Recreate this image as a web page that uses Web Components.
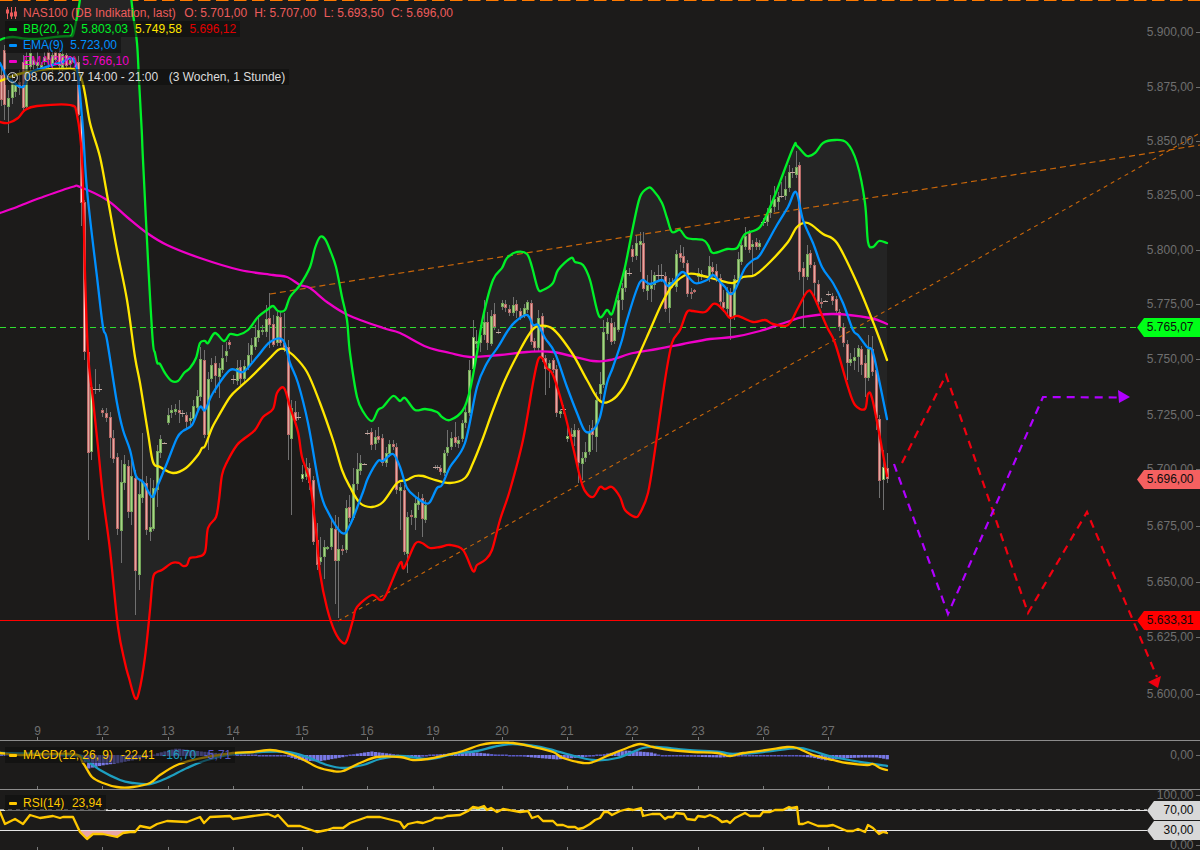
<!DOCTYPE html>
<html><head><meta charset="utf-8"><title>NAS100</title>
<style>html,body{margin:0;padding:0;background:#1c1b1a;overflow:hidden}</style></head>
<body>
<trade-chart>
  <main-panel>
    <chart-legend>
      <legend-row kind="candle" color="#ec5c5c"><span>NAS100 (DB Indikation, last)</span><span style="margin-left:1px">O: 5.701,00</span><span style="margin-left:-.5px">H: 5.707,00</span><span>L: 5.693,50</span><span style="margin-left:-.5px">C: 5.696,00</span></legend-row>
      <legend-row kind="line" color="#00f028" shade><span>BB(20, 2)</span><span>5.803,03</span><span style="color:#ffe600;margin-left:-.5px">5.749,58</span><span style="color:#e00000">5.696,12</span></legend-row>
      <legend-row kind="line" color="#0090ff" shade><span>EMA(9)</span><span style="margin-left:-1px">5.723,00</span></legend-row>
      <legend-row kind="line" color="#f000c8"><span>EMA(200)</span><span style="margin-left:-2.5px">5.766,10</span></legend-row>
      <legend-row kind="clock" color="#dcdcdc" shade><span style="margin-left:1px">08.06.2017 14:00 - 21:00</span><span style="margin-left:3px">(3 Wochen, 1 Stunde)</span></legend-row>
    </chart-legend>
    <price-tag top="318" bg="#00ff18">5.765,07</price-tag>
    <price-tag top="470" bg="#f46060">5.696,00</price-tag>
    <price-tag top="611" bg="#ff0000">5.633,31</price-tag>
  </main-panel>
  <macd-panel>
    <chart-legend offset="6">
      <legend-row kind="line" color="#ffc800" shade><span>MACD(12, 26, 9)</span><span>-22,41</span><span style="color:#1e9fc0">-16,70</span><span style="color:#5a5ac8">-5,71</span></legend-row>
    </chart-legend>
  </macd-panel>
  <rsi-panel>
    <chart-legend offset="5">
      <legend-row kind="line" color="#ffc800" shade><span>RSI(14)</span><span>23,94</span></legend-row>
    </chart-legend>
    <price-tag top="11" bg="#d8d8d8" short>70,00</price-tag>
    <price-tag top="31" bg="#d8d8d8" short>30,00</price-tag>
  </rsi-panel>
</trade-chart>
<script>
const FONT='"Liberation Sans",Arial,sans-serif';
const DAYS=[[37.5,'9'],[102.5,'12'],[168,'13'],[233,'14'],[302,'15'],[367,'16'],[433,'19'],[502,'20'],[567,'21'],[632,'22'],[698,'23'],[763,'26'],[828,'27']];

const P=s=>s.trim().split(/\s+/).map(p=>p.split(',').map(Number));
const UPPER=P(`0,40 5,38 13,37 20,38 33,39 47,38 60,36.5 70,36 73,35 76,22 78,12 80.5,-4 131,-4 133,14 137,43 139,80 141.7,130 143,160 148,260 152.7,340 155,353 157.3,363 160,364 165,373 171.7,381 178,381 184,373 190,368 196,358 200,343 205,341 208,343 215,333 224,341 230,334 238,335 248,330 258,317 267,310 273,306 278,311 285,310 290,297 300,285 310,267 315,248 320,237 325,239 330,250 336,267 342,297 347,320 350,353 357,397 364,413 372,421 378,410 383,407 393,396 400,401 405,398 415,410 425,409 437,412 442,417 450,420 463,410 470,390 477,353 483,317 493,280 502,268 507,258 517,252 527,254 532,267 538,289 543,290 553,283 558,270 571,258 575,262 583,265 590,280 599,316 607,310 612,314 618,293 625,267 633,227 640,197 648,188 653,190 662,203 667,218 672,232 680,230 687,238 703,240 708,245 713,253 727,249 737,248 745,234 760,227 773,200 793,148 797,146 807,156 815,153 823,143 835,140 847,143 857,163 865,203 868,242 873,247 879,241 887,243`);
const LOWER=P(`0,122 8,123 18,118 25,110 37,106 70,105 77,115 82,160 85,273 88,353 93,400 98,447 103,497 110,550 118,627 125,663 129,678 135,698 139,692 145,657 150,610 153,578 157,572 162,570 172,563 179,563 183,566 187,565 190,558 197,557 205,552 208,528 216,517 219,500 222,475 227,462 237,445 245,438 255,430 263,417 273,409 277,393 284,388 290,407 298,432 302,457 310,483 317,540 320,573 327,608 335,632 343,643 347,640 353,620 357,607 372,595 380,600 386,595 400,563 404,568 415,544 422,543 430,548 440,547 450,545 463,550 473,571 477,565 485,560 492,550 500,520 510,490 523,440 533,383 538,360 542,358 547,368 553,375 563,407 573,447 580,477 585,491 593,497 600,487 605,489 612,487 620,497 625,510 635,517 640,513 648,493 655,450 665,380 672,343 680,330 687,312 693,311 705,312 713,304 718,305 725,312 730,318 738,316 753,322 765,320 773,324 788,325 798,308 807,292 813,295 827,327 835,343 848,387 855,405 865,409 868,394 873,402 887,476`);
const MID=P(`0,81 23,73 60,69 80,75 90,123 100,157 108,200 117,250 127,300 135,357 140,383 148,433 153,462 160,467 173,473 186,468 198,455 202,448 205,446 212,428 218,417 230,397 240,387 250,378 270,358 278,350 284,349 293,355 307,372 320,403 333,440 342,470 350,487 360,503 372,507 383,502 397,483 407,480 415,476 423,476 432,479 450,483 465,478 473,463 483,438 493,410 505,380 520,350 530,333 538,326 553,329 572,353 587,380 600,401 612,400 623,388 633,368 650,330 662,303 673,285 688,274 703,276 718,280 733,283 743,277 755,275 770,262 788,242 797,227 808,223 823,234 837,243 857,283 875,327 887,360`);
const EMA9=P(`0,63 7,77 13,82 23,87 30,73 43,68 60,63 75,62 82,117 87,190 97,277 103,327 107,340 117,403 123,430 130,450 136,476 143,482 152,497 157,487 167,463 177,438 183,431 192,425 200,407 205,410 213,393 230,370 243,372 257,357 270,342 283,340 290,363 298,383 308,423 320,490 328,512 342,533 350,525 363,492 368,478 378,461 383,461 393,454 400,467 407,488 417,498 425,503 430,502 437,488 442,485 450,467 465,443 477,387 487,363 498,347 507,332 515,322 527,315 533,325 538,325 545,338 555,353 567,387 577,413 585,431 593,430 600,417 607,383 613,367 622,340 627,320 640,282 650,284 662,280 668,286 675,280 683,272 695,283 707,280 713,275 720,282 725,287 730,294 735,290 745,268 753,260 760,255 777,225 788,207 796,192 803,220 813,243 822,267 833,283 843,303 853,330 858,335 867,347 872,350 877,370 887,419`);
const EMA200=P(`0,213 17,207 40,198 72,187 80,187 107,200 127,217 147,233 167,245 200,258 240,270 273,275 287,277 300,285 310,288 327,302 348,315 383,328 400,333 427,347 450,353 470,357 500,355 527,352 553,352 593,361 610,360 633,353 657,349 683,344 710,339 733,337 760,331 787,322 803,317 833,314 870,318 887,324`);
const MACD_Y=P(`0,753 20,755 73,754 83,763 92,777 103,783 117,787 133,787 150,783 160,775 177,765 197,759 213,756 233,753 253,752 270,750 283,752 300,758 317,767 333,771 343,771 360,763 377,757 400,757 413,760 428,759 447,755 463,751 480,745 492,743 513,743 533,747 553,752 563,758 583,763 593,762 607,756 627,748 640,744 653,747 670,750 693,752 717,753 730,756 743,753 767,750 787,747 797,748 813,755 833,760 847,763 867,765 873,764 880,768 887,770`);
const MACD_T=P(`0,753 73,755 83,758 100,770 120,780 133,783 150,784 167,778 187,768 207,760 233,754 260,752 287,752 307,757 327,765 343,768 363,765 380,759 400,756 430,759 453,754 477,751 493,747 513,744 540,747 567,754 593,760 617,758 643,748 657,747 687,750 720,752 733,754 763,752 797,748 813,751 833,757 867,763 887,766`);
const HIST=P(`0,-1 40,0 80,1 87,13 100,10 120,7 150,1 155,-2 175,-7 200,-4 230,-1 285,1 300,5 317,6 345,1 350,-1 370,-4 395,-1 400,1 418,2 430,-1 450,-2 475,-3 495,-1 520,1 555,4 590,1 600,-1 625,-5 650,-3 660,0 680,1 720,2 735,1 797,1 810,2 825,5 840,3 860,2 875,2 887,4`);
const RSI=P(`0,812 5,824 15,819 23,824 30,815 40,818 53,816 60,818 63,817 73,817 80,832 87,839 93,834 103,834 117,837 123,833 130,832 135,832 140,826 150,828 157,824 167,821 187,822 200,817 204,823 210,817 230,816 233,819 253,816 268,814 275,817 278,815 288,826 300,826 317,832 327,830 333,828 343,828 350,823 367,817 380,817 400,822 404,828 408,824 417,822 423,823 432,820 435,818 442,818 447,816 460,815 468,811 473,807 478,808 484,806 487,810 491,808 497,812 503,809 520,812 528,811 532,818 538,816 543,821 553,821 557,825 563,825 568,827 575,827 578,829 583,828 590,824 595,820 600,818 604,812 608,812 612,815 620,811 628,809 633,810 641,808 643,816 652,814 660,814 665,819 668,817 673,817 676,813 684,814 687,819 695,820 698,816 705,817 710,815 717,818 722,822 727,821 730,823 735,818 745,813 750,816 760,816 763,812 770,812 775,810 783,810 789,807 792,808 797,807 799,824 803,824 808,822 818,826 827,826 833,825 840,828 847,831 853,831 858,829 865,832 868,825 873,828 879,834 883,832 887,833`);

const C=[[1,75,100,'r',68,106],[4,50,105,'r',45,120],[8,98,107,'g',90,133],[12,82,98,'g',74,104],[15,85,92,'g'],[19,82,88,'r',70,95],[23,62,108,'r',55,111],[26,60,107,'g',52,110],[30,53,67,'g',45,75],[33,60,65,'g'],[37,62,66,'g',52,72],[41,65,68,'g'],[44,57,62,'g'],[48,52,60,'r',46,68],[52,55,64,'g',50,72],[55,52,60,'r'],[59,53,66,'r',48,72],[62,54,68,'g'],[66,55,66,'r'],[70,60,64,'g'],[73,58,62,'r'],[77.7,62,115,'r',56,116],[81,116,203,'R',114,226],[84,202,352,'R',200,360],[88,352,453,'r',350,540],[91,387,452,'G',385,460],
[95,389,389,'d',369,394],[99,389,389,'d'],[102,410,413,'r'],[106,413,418,'r',408,422],[110,417,438,'r',412,458],[113,438,459,'r',430,463],[117,457,529,'r',453,535],[121,482,531,'g',460,563],[124,464,483,'g',455,490],[128,466,512,'r',460,518],[131,476,512,'g',453,525],[135,478,571,'r',470,615],[139,494,575,'g',480,590],[142,482,498,'g',433,503],[146,483,530,'r',476,535],[150,527,532,'g',478,541],[153,488,529,'g',480,531],[157,451,490,'g',445,507],[160,439,453,'g'],[164,443,443,'d'],[168,415,423,'g',408,425],[171,410,413,'g',405,418],[175,409,412,'g',404,415],[179,410,413,'r',400,423],[182,413,413,'d',410,417],[186,415,422,'r',412,428],[190,418,421,'g',412,425],[193,406,419,'g',400,423],[197,396,408,'g',390,412],[200,359,397,'g',347,401],[204,360,435,'r',350,438],[208,379,435,'g',372,450],[211,365,379,'g',358,382],[215,363,376,'r',356,393],[219,368,377,'g',363,398],[222,358,370,'g',345,373],[226,351,356,'g',342,362],[229,342,345,'r'],[233,379,379,'d'],[237,368,381,'g',360,385],[240,367,379,'r',360,385],[244,366,379,'g',360,382],[248,355,367,'g',343,370],[251,345,355,'g',338,362],[255,337,347,'g',325,350],[258,330,338,'g',315,342],[262,330,332,'g'],[266,319,332,'g',305,337],[269,318,325,'r',293,348],[273,324,345,'r',315,347],[277,316,343,'g',312,346],[280,317,343,'r',312,346],[284,343,348,'r',313,352],[288,347,435,'r',340,460],[291,408,439,'g',400,515],[295,412,421,'r',401,425],[298,417,417,'d'],
[302,474,479,'G',465,482],[306,467,477,'g',458,480],[309,468,483,'r',463,490],[313,480,542,'r',476,545],[317,540,565,'r',523,570],[320,557,562,'g',537,565],[324,547,557,'g',540,579],[327,547,549,'g'],[331,528,547,'g',520,550],[335,529,561,'r',515,604],[338,549,561,'g',517,618],[342,549,551,'r',545,555],[346,508,550,'g',500,553],[349,507,518,'r',495,522],[353,484,518,'g',468,520],[357,469,484,'g',453,490],[360,463,471,'g',455,475],[364,464,464,'d'],[367,433,433,'d'],[371,432,445,'r',428,450],[375,437,444,'g',430,450],[378,436,440,'r',427,443],[382,438,463,'r',434,466],[386,453,463,'g',447,467],[389,444,454,'g',440,457],[393,444,447,'r',440,450],[396,447,490,'r',443,494],[400,487,491,'g',483,530],[404,490,552,'r',485,555],[407,517,554,'g',512,573],[411,515,517,'r',510,525],[415,503,518,'g',497,530],[418,499,505,'g',492,510],[422,498,519,'r',494,537],[425,505,520,'g',500,523],
[435,467,467,'d',465,469],[437,467,467,'d',465,470],[440,468,472,'r',465,475],[444,453,473,'g',450,476],[447,447,453,'g',430,456],[451,438,447,'g',432,450],[455,437,443,'r',422,447],[458,440,444,'g',436,448],[462,423,439,'g',420,442],[465,412,423,'g',405,428],[469,370,413,'g',360,416],[473,337,369,'G',320,372],[476,341,344,'g',330,348],[480,335,343,'g',325,352],[484,322,335,'g',300,340],[487,322,343,'r',312,350],[491,316,344,'g',310,346],[494,314,327,'r',303,330],[498,332,332,'d'],[502,303,307,'g',300,310],[505,304,308,'r',300,312],[509,309,313,'r',305,316],[513,305,313,'g',297,316],[516,304,311,'r',300,318],[520,311,317,'r',308,320],[524,308,315,'g',304,318],[527,302,310,'g',300,313],[531,303,342,'r',300,345],[534,341,348,'r',338,352],[538,318,348,'g',310,352],[542,316,358,'r',313,362],[545,358,369,'r',355,395],[549,363,369,'g',360,388],[553,360,370,'r',358,373],[556,369,413,'r',365,417],[560,411,414,'g'],[563,409,409,'d'],[567,436,439,'G',427,442],[571,434,437,'r',428,442],[574,430,437,'g',424,446],[578,430,463,'r',428,483],[582,458,464,'g',452,480],[585,452,458,'g',442,462],[589,432,452,'g',425,455],[592,428,435,'r',420,450],[596,400,437,'g',392,452],[600,384,394,'g',372,400],[603,332,385,'g',320,388],[607,322,334,'g',318,340],[611,323,342,'r',318,345],[614,327,341,'g',322,344],[618,300,330,'g',295,332],[622,288,300,'g',283,310],[625,270,288,'g',263,292],[629,273,273,'d'],[632,249,257,'r',245,262],[636,243,256,'g',235,260],[640,241,245,'g',232,272],[643,243,289,'r',232,292],[647,285,291,'g',275,300],[651,285,289,'g',270,302],[654,275,285,'g',272,290],[658,275,275,'d',265,280],[661,275,275,'d',264,282],[665,276,309,'r',272,312],[669,282,308,'g',278,323],[672,282,285,'g',278,288],[676,254,287,'g',250,292],[680,253,258,'r',245,262],[683,256,263,'r',247,268],[687,263,294,'r',260,297],[691,292,294,'r'],[694,290,292,'r'],[698,273,277,'g',268,282],[701,274,277,'g',270,280],[709,266,277,'g',256,282],[712,267,272,'r',262,277],[716,271,278,'r',264,282],[720,278,302,'r',274,306],[723,302,308,'r',290,312],[727,292,309,'g',287,314],[730,292,318,'r',288,340],[734,279,317,'g',275,320],[738,259,279,'g',252,282],[741,245,262,'g',240,265],[745,236,247,'g',227,250],[749,233,250,'r',230,253],[752,244,247,'g',240,275],[756,242,247,'r',238,250],[759,243,247,'g',240,250],[763,222,222,'d',218,226],[767,214,222,'g',208,226],[770,208,213,'g',195,218],[774,199,207,'g',186,212],[778,197,202,'g',192,210],[781,196,196,'d',182,198],[785,189,196,'g',176,200],[789,172,188,'g',165,192],[792,172,172,'d',168,178],[796,167,175,'g',151,178],[799,165,272,'r',162,280],[803,268,277,'r',262,327],[807,254,277,'g',245,280],[810,253,265,'r',250,268],[814,265,283,'r',262,296],[818,284,302,'r',280,305],[821,302,304,'r',298,308],[825,301,301,'d'],[828,294,294,'d'],[832,296,301,'r',293,305],[836,299,311,'r',296,315],[839,312,327,'r',309,331],[843,327,343,'r',323,347],[847,344,363,'r',340,380],[850,359,363,'g',353,366],[854,357,361,'g',348,370],[858,348,357,'g',345,372],[861,349,365,'r',346,375],[865,363,378,'r',355,397],[868,349,378,'g',335,381],[872,349,372,'r',336,376],[876,370,418,'r',366,430],[879,419,481,'r',415,498],[883,467,480,'G',450,510],[887,468,479,'r',453,483]];

function curve(pts){
  let d=`M${pts[0][0]},${pts[0][1]}`;
  for(let i=0;i<pts.length-1;i++){
    const p0=pts[i-1]||pts[i],p1=pts[i],p2=pts[i+1],p3=pts[i+2]||p2;
    const k=1/6;
    d+=` C${(p1[0]+(p2[0]-p0[0])*k).toFixed(1)},${(p1[1]+(p2[1]-p0[1])*k).toFixed(1)} ${(p2[0]-(p3[0]-p1[0])*k).toFixed(1)},${(p2[1]-(p3[1]-p1[1])*k).toFixed(1)} ${p2[0]},${p2[1]}`;
  }
  return d;
}
const poly=pts=>pts.map(p=>p.join(',')).join(' ');
const line=(pts,col,w=2.3)=>`<path d="${curve(pts)}" fill="none" stroke="${col}" stroke-width="${w}" stroke-linejoin="round" stroke-linecap="round"/>`;
const pline=(pts,col,w=2.3)=>`<polyline points="${poly(pts)}" fill="none" stroke="${col}" stroke-width="${w}" stroke-linejoin="round" stroke-linecap="round"/>`;
const axisText=(y,t)=>`<text x="1193.5" y="${y+4}" text-anchor="end" fill="#6f6f6f" font-size="12">${t}</text><rect x="1196" y="${y}" width="4" height="1" fill="#6f6f6f"/>`;
const ticks=(y,h)=>DAYS.map(([x])=>`<rect x="${Math.floor(x)}" y="${y}" width="1" height="${h}" fill="#7a7a7a"/>`).join('');

function candles(){
  const wick=[],body=[];
  C.forEach((c,i)=>{
    let [x,t,b,k,wt,wb]=c; x=Math.round(x);
    if(wt===undefined){wt=t-(i*7%5+1);wb=b+(i*11%5+1);}
    wick.push(`<rect x="${x}" y="${wt}" width="1" height="${wb-wt}" fill="#707070"/>`);
    if(k==='d'){body.push(`<rect x="${x-2}" y="${t}" width="5" height="1" fill="#c8a8a0"/>`);return;}
    const red=k==='r'||k==='R';
    const edge=red?'#b86a68':'#74a65a';
    const mid=k==='R'?'#ffd4d0':k==='G'?'#e4ffb4':red?'#e4a8a2':'#a8d486';
    body.push(`<rect x="${x-1}" y="${t}" width="3" height="${Math.max(b-t,2)}" fill="${edge}"/>`);
    if(b-t>2)body.push(`<rect x="${x}" y="${t+1}" width="1" height="${b-t-2}" fill="${mid}"/>`);
  });
  return `<g shape-rendering="crispEdges">${wick.join('')}${body.join('')}</g>`;
}

class TradeChart extends HTMLElement{
  constructor(){super();this.attachShadow({mode:'open'}).innerHTML=`<style>:host{display:flex;flex-direction:column;width:1200px;height:850px;background:#1c1b1a;overflow:hidden;font:12px ${FONT}}</style><slot></slot>`;}
}
class PanelBase extends HTMLElement{
  build(h,border,svg,vb){
    this.attachShadow({mode:'open'}).innerHTML=`<style>:host{display:block;position:relative;flex:none;height:${h}px;box-sizing:border-box;${border?'border-top:1px solid #8c8c8c;':''}}
    svg{display:block;width:1200px;height:${border?h-1:h}px;font-family:${FONT};overflow:visible}</style>
    <svg viewBox="${vb}" xmlns="http://www.w3.org/2000/svg">${svg}</svg><slot></slot>`;
  }
}
class MainPanel extends PanelBase{
  constructor(){super();
    const band=UPPER.concat(LOWER.slice().reverse());
    const labels=[[32,'5.900,00'],[87,'5.875,00'],[141,'5.850,00'],[195,'5.825,00'],[250,'5.800,00'],[304,'5.775,00'],[359,'5.750,00'],[415,'5.725,00'],[469,'5.700,00'],[526,'5.675,00'],[582,'5.650,00'],[637,'5.625,00'],[694,'5.600,00']];
    const s=`
    <rect x="0" y="0" width="1200" height="1" fill="#ff7a00"/>
    <line x1="0" y1="0.5" x2="1200" y2="0.5" stroke="#1c1b1a" stroke-width="2" stroke-dasharray="5.5 12.5" stroke-dashoffset="-12.5"/>
    <polygon points="${poly(band)}" fill="#242424"/>
    ${labels.map(l=>axisText(l[0],l[1])).join('')}
    ${DAYS.map(([x,t])=>`<text x="${x}" y="735" text-anchor="middle" fill="#6f6f6f" font-size="12">${t}</text>`).join('')}
    ${ticks(737,3)}
    <line x1="0" y1="327.5" x2="1137" y2="327.5" stroke="#2fe02f" stroke-width="1" stroke-dasharray="6 4"/>
    ${candles()}
    <line x1="270" y1="294" x2="1200" y2="145" stroke="#c8660a" stroke-width="1.2" stroke-dasharray="6 4"/>
    <line x1="338" y1="621" x2="1200" y2="133" stroke="#c8660a" stroke-width="1.1" stroke-dasharray="4 4"/>
    ${line(EMA200,'#f000c8')}${line(UPPER.slice(0,12),'#00f028')}${line(UPPER.slice(12),'#00f028')}${line(LOWER,'#ff0000')}${line(MID,'#ffe600')}${line(EMA9,'#0090ff')}
    <rect x="0" y="620" width="1137" height="1" fill="#ff0000"/>
    <polyline points="902,463 946,375 1028,613 1087,512 1157,677" fill="none" stroke="#f00010" stroke-width="2.2" stroke-dasharray="8 6"/>
    <polygon points="1148,682 1161,676 1158,688" fill="#f00010"/>
    <polyline points="894,464 948,614 1043,397 1120,397.5" fill="none" stroke="#b000ff" stroke-width="2.2" stroke-dasharray="8 6"/>
    <polygon points="1118,390 1130,397 1119,403" fill="#b000ff"/>`;
    this.build(740,false,s,'0 0 1200 740');
  }
}
class MacdPanel extends PanelBase{
  constructor(){super();
    let bars='';
    const amp=x=>{for(let i=0;i<HIST.length-1;i++){const a=HIST[i],b=HIST[i+1];if(x>=a[0]&&x<=b[0])return a[1]+(b[1]-a[1])*(x-a[0])/(b[0]-a[0]);}return 0;};
    for(let i=0;i*3.63<=886;i++){const x=i*3.63,h=amp(x);const r=Math.abs(h)<1?1:Math.abs(h);
      bars+=`<rect x="${x.toFixed(1)}" y="${(h<0?755.5-r:755).toFixed(1)}" width="3.2" height="${(r+.5).toFixed(1)}" fill="${r>1.5?'#7878e6':'#5a5ac4'}"/>`;}
    const s=`${axisText(755,'0,00')}${ticks(786,3)}${bars}${line(MACD_T,'#1e9fc0')}${line(MACD_Y,'#ffc800')}`;
    this.build(49,true,s,'0 741 1200 48');
  }
}
class RsiPanel extends PanelBase{
  constructor(){super();
    const area=`0,830 ${poly(RSI)} 887,830`;
    const s=`
    <defs><clipPath id="lo"><rect x="0" y="830" width="900" height="20"/></clipPath><clipPath id="hi"><rect x="0" y="790" width="900" height="20"/></clipPath></defs>
    <polygon points="${area}" fill="#e8a6a6" clip-path="url(#lo)"/>
    <polygon points="0,810 ${poly(RSI)} 887,810" fill="#b8e8b0" clip-path="url(#hi)"/>
    ${axisText(795,'100,00')}${axisText(845,'0,00')}${ticks(847,3)}
    <line x1="0" y1="809.5" x2="1147" y2="809.5" stroke="#9a9a9a" stroke-dasharray="4 4"/>
    <rect x="0" y="810" width="1147" height="1" fill="#e4e4e4"/>
    <rect x="0" y="830" width="1147" height="1" fill="#e4e4e4"/>
    ${pline(RSI,'#ffc800')}`;
    this.build(61,true,s,'0 790 1200 60');
  }
}
class ChartLegend extends HTMLElement{
  constructor(){super();this.attachShadow({mode:'open'}).innerHTML=`<style>:host{display:flex;flex-direction:column;align-items:flex-start;position:absolute;left:5px;top:5px;font:12px ${FONT}}</style><slot></slot>`;}
  connectedCallback(){if(this.hasAttribute('offset'))this.style.top=this.getAttribute('offset')+'px';}
}
class LegendRow extends HTMLElement{
  connectedCallback(){
    if(this.shadowRoot)return;
    const col=this.getAttribute('color'),kind=this.getAttribute('kind');
    const icons={
      candle:`<svg width="11" height="12" viewBox="0 0 11 12" stroke="${col}" fill="${col}"><path d="M1.5 0V12M5.5 0V12M9.5 0V12" fill="none"/><rect x=".5" y="3" width="2" height="3"/><rect x="4.5" y="6" width="2" height="3"/><rect x="8.5" y="5" width="2" height="4"/></svg>`,
      line:`<span class="bar"></span>`,
      clock:`<svg width="11" height="11" viewBox="0 0 11 11" fill="none" stroke="${col}"><circle cx="5.5" cy="5.5" r="4.9"/><path d="M5.5 2.5V5.5H8"/></svg>`};
    const left={candle:1,line:4,clock:2}[kind];
    this.attachShadow({mode:'open'}).innerHTML=`<style>
    :host{display:flex;align-items:center;height:16px;line-height:16px;white-space:pre;color:${col};padding-right:4px;background:${this.hasAttribute('shade')?'rgba(12,12,12,.55)':'transparent'}}
    .ic{flex:none;width:18px;display:flex;align-items:center;box-sizing:border-box;padding-left:${left}px}
    .bar{display:block;width:8px;height:3px;border-radius:1px;background:${col}}
    .txt{display:flex;gap:7.6px}
    ::slotted(span){white-space:pre}
    </style><span class="ic">${icons[kind]}</span><span class="txt"><slot></slot></span>`;
  }
}
class PriceTag extends HTMLElement{
  connectedCallback(){
    if(this.shadowRoot)return;
    const short=this.hasAttribute('short');
    this.attachShadow({mode:'open'}).innerHTML=`<style>:host{position:absolute;right:0;top:${this.getAttribute('top')}px;width:${short?53:63}px;height:19px;box-sizing:border-box;padding-right:6.5px;text-align:right;font:12px/19px ${FONT};color:#0c0c0c;background:${this.getAttribute('bg')};clip-path:polygon(7px 0,100% 0,100% 100%,7px 100%,0 50%)}</style><slot></slot>`;
  }
}
[['trade-chart',TradeChart],['main-panel',MainPanel],['macd-panel',MacdPanel],['rsi-panel',RsiPanel],['chart-legend',ChartLegend],['legend-row',LegendRow],['price-tag',PriceTag]].forEach(([n,c])=>customElements.define(n,c));
</script>
</body></html>
